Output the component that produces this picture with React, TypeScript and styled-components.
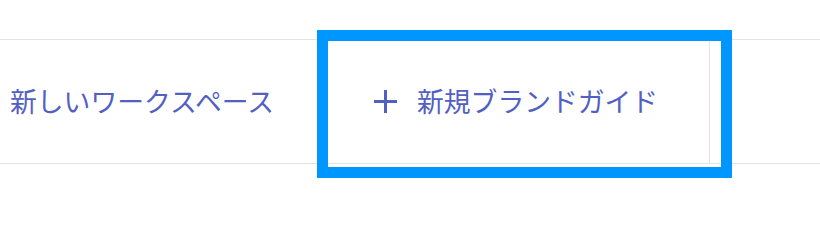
import styled, { createGlobalStyle } from 'styled-components'

const GlobalStyle = createGlobalStyle`
  body {
    margin: 0;
    background: #ffffff;
    font-family: "Noto Sans CJK JP", "Noto Sans", sans-serif;
  }
`

const Page = styled.div`
  width: 820px;
  height: 208px;
  padding-top: 39px;
  box-sizing: border-box;
  overflow: hidden;
`

const TabRow = styled.div`
  position: relative;
  display: flex;
  height: 125px;
  border-top: 1px solid #e3e3e3;
  border-bottom: 1px solid #e3e3e3;
  box-sizing: border-box;
`

const Tab = styled.div<{ $width: number; $inset: number; $divider?: boolean }>`
  width: ${props => props.$width}px;
  flex-shrink: 0;
  display: flex;
  align-items: center;
  padding-left: ${props => props.$inset}px;
  box-sizing: border-box;
  border-right: ${props => props.$divider ? '1px solid #e3e3e3' : 'none'};
`

const Label = styled.span`
  font-size: 26.8px;
  line-height: 1;
  color: #5260c2;
  white-space: nowrap;
`

const AddButton = styled.div`
  display: flex;
  align-items: center;
  gap: 20px;
  color: #5260c2;
`

const Highlight = styled.div`
  position: absolute;
  left: 317px;
  top: -10px;
  width: 415px;
  height: 148px;
  border: 11px solid #0096ff;
  box-sizing: border-box;
  pointer-events: none;
`

const PlusIcon = () => (
  <svg width="23" height="23" viewBox="0 0 23 23">
    <rect x="10" y="0" width="3" height="23" fill="currentColor" />
    <rect x="0" y="10" width="23" height="3" fill="currentColor" />
  </svg>
)

export default function App() {
  return (
    <>
      <GlobalStyle />
      <Page>
        <TabRow>
          <Tab $width={320} $inset={10}>
            <Label>新しいワークスペース</Label>
          </Tab>
          <Tab $width={390} $inset={54} $divider>
            <AddButton>
              <PlusIcon />
              <Label>新規ブランドガイド</Label>
            </AddButton>
          </Tab>
          <Highlight />
        </TabRow>
      </Page>
    </>
  )
}
